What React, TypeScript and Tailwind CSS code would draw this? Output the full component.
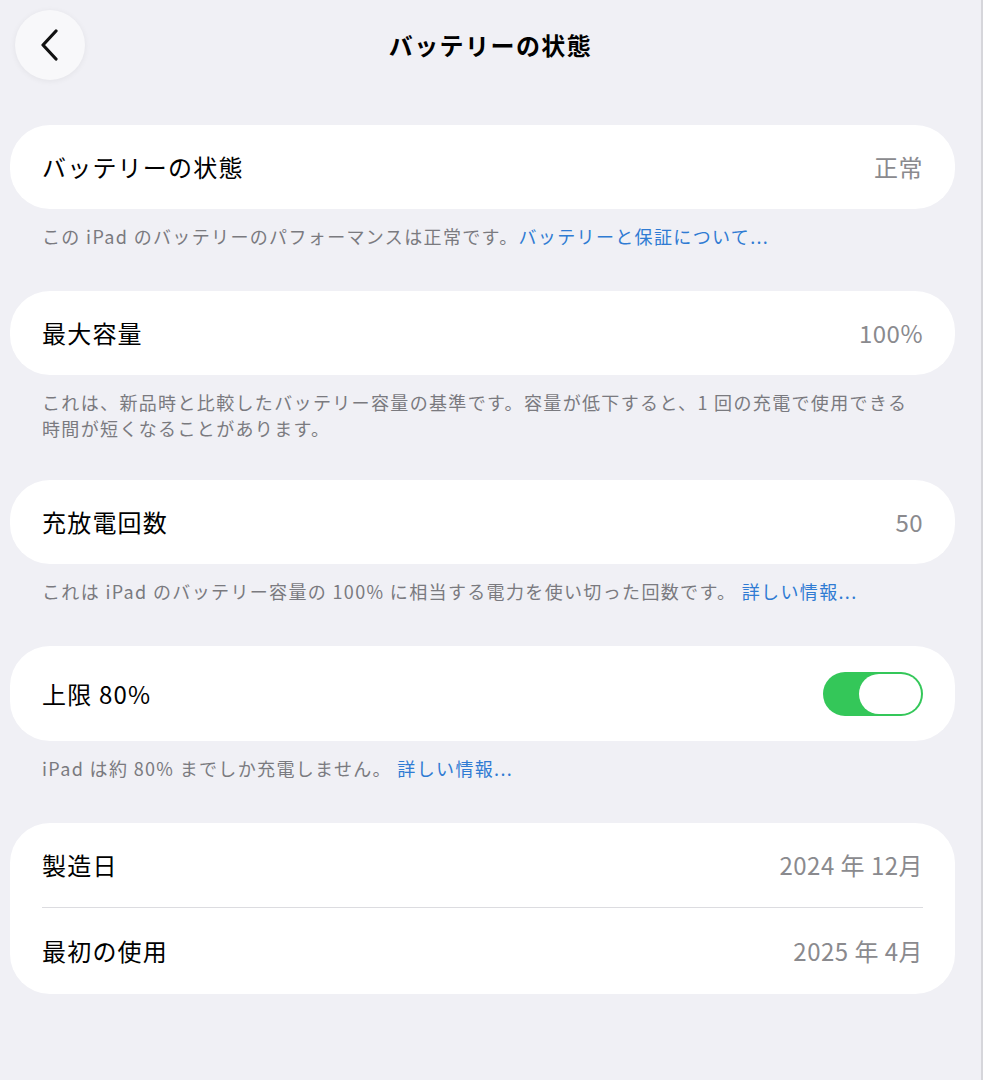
import type { ReactNode } from "react";

function Card({ children, className = "" }: { children: ReactNode; className?: string }) {
  return <div className={`rounded-[40px] bg-white px-8 ${className}`}>{children}</div>;
}

function Row({ label, value, h = "h-[84px]" }: { label: string; value?: ReactNode; h?: string }) {
  return (
    <div className={`flex items-center justify-between ${h}`}>
      <span className="text-[24px] tracking-[0.05em] text-black">{label}</span>
      <span className="text-[24px] tracking-[0.02em] text-[#8a8a8e]">{value}</span>
    </div>
  );
}

function Footer({ children }: { children: ReactNode }) {
  return (
    <p className="mt-[14px] px-8 text-[18px] leading-[26px] tracking-[0.075em] text-[#7a7a7f]">
      {children}
    </p>
  );
}

function Link({ children }: { children: ReactNode }) {
  return <span className="text-[#2f7bd3]">{children}</span>;
}

function Toggle() {
  return (
    <div className="flex h-[44px] w-[100px] items-center justify-end rounded-full bg-[#34c759] p-[2px]">
      <div className="h-[40px] w-[62px] rounded-full bg-white" />
    </div>
  );
}

export default function App() {
  return (
    <div className="min-h-[1080px] w-full border-r-2 border-[#d6d6db] bg-[#f0f0f5] font-['Noto_Sans_CJK_JP','Noto_Sans',sans-serif]">
      <header className="grid h-[90px] grid-cols-[100px_1fr_100px] items-center">
        <button
          aria-label="戻る"
          className="ml-[15px] flex h-[70px] w-[70px] items-center justify-center rounded-full bg-[#f8f8fa] shadow-[0_1px_6px_rgba(0,0,0,0.06)]"
        >
          <svg width="22" height="32" viewBox="0 0 22 32" fill="none">
            <path d="M17 2 L4 16 L17 30" stroke="#111" strokeWidth="3.2" strokeLinecap="round" strokeLinejoin="round" />
          </svg>
        </button>
        <h1 className="text-center text-[24px] font-bold tracking-[0.06em] text-black">バッテリーの状態</h1>
        <div />
      </header>

      <main className="mt-[35px] pl-[10px] pr-[26px]">
        <Card>
          <Row label="バッテリーの状態" value="正常" />
        </Card>
        <Footer>
          この iPad のバッテリーのパフォーマンスは正常です。<Link>バッテリーと保証について...</Link>
        </Footer>

        <Card className="mt-[42px]">
          <Row label="最大容量" value="100%" />
        </Card>
        <Footer>
          これは、新品時と比較したバッテリー容量の基準です。容量が低下すると、1 回の充電で使用できる時間が短くなることがあります。
        </Footer>

        <Card className="mt-[39px]">
          <Row label="充放電回数" value="50" />
        </Card>
        <Footer>
          これは iPad のバッテリー容量の 100% に相当する電力を使い切った回数です。 <Link>詳しい情報...</Link>
        </Footer>

        <Card className="mt-[42px]">
          <Row label="上限 80%" value={<Toggle />} h="h-[95px]" />
        </Card>
        <Footer>
          iPad は約 80% までしか充電しません。 <Link>詳しい情報...</Link>
        </Footer>

        <Card className="mt-[42px]">
          <Row label="製造日" value="2024 年 12月" h="h-[84px]" />
          <div className="h-px bg-[#dcdce0]" />
          <Row label="最初の使用" value="2025 年 4月" h="h-[86px]" />
        </Card>
      </main>
    </div>
  );
}
